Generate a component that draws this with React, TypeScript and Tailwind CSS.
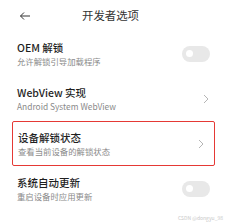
import React from 'react';

interface Item {
  title: string;
  desc: string;
  kind: 'toggle' | 'chevron';
  boxed?: boolean;
}

const items: Item[] = [
  { title: 'OEM 解锁', desc: '允许解锁引导加载程序', kind: 'toggle' },
  { title: 'WebView 实现', desc: 'Android System WebView', kind: 'chevron' },
  { title: '设备解锁状态', desc: '查看当前设备的解锁状态', kind: 'chevron', boxed: true },
  { title: '系统自动更新', desc: '重启设备时应用更新', kind: 'toggle' },
  { title: 'USB 调试', desc: '连接 USB 后启用调试模式', kind: 'toggle' },
];

function Toggle() {
  return (
    <div className="w-[28px] h-[16px] rounded-full bg-[#e8e8e8] flex items-center pl-[4px] shrink-0">
      <div className="w-[7px] h-[7px] rounded-full bg-white" />
    </div>
  );
}

function Chevron() {
  return (
    <svg width="6" height="10" viewBox="0 0 6 10" className="shrink-0 mr-[1px]">
      <path d="M1 1 L5 5 L1 9" fill="none" stroke="#b5b5b5" strokeWidth="1" />
    </svg>
  );
}

export default function App() {
  return (
    <div
      className="relative w-[227px] h-[222px] overflow-hidden bg-white"
      style={{ fontFamily: '"Noto Sans CJK SC", "Noto Sans", sans-serif' }}
    >
      {/* Header */}
      <div className="h-[31px] flex items-center pl-[19px]">
        <svg width="12" height="10" viewBox="0 0 12 10">
          <path d="M11 5 H1.5 M5 1.5 L1.5 5 L5 8.5" fill="none" stroke="#333" strokeWidth="1" />
        </svg>
        <span className="ml-[51px] text-[11.4px] text-[#333] leading-none">开发者选项</span>
      </div>

      {/* Settings list */}
      <div className="flex flex-col">
        {items.map((item) => (
          <div
            key={item.title}
            className={
              item.boxed
                ? 'h-[45px] mx-[12px] px-[5px] pr-[9px] border-[1.5px] border-[#e53935] rounded-[2px] flex items-center justify-between'
                : 'h-[45px] px-[17px] flex items-center justify-between'
            }
          >
            <div className="flex flex-col">
              <span className="text-[10.5px] font-medium text-[#1f1f1f] leading-[14px]">{item.title}</span>
              <span className="text-[8.4px] text-[#8a8a8a] leading-[11px] mt-[1px]">{item.desc}</span>
            </div>
            {item.kind === 'toggle' ? <Toggle /> : <Chevron />}
          </div>
        ))}
      </div>

      {/* Watermark */}
      <span className="absolute right-[4px] bottom-[2px] text-[5px] text-[#c8c8c8] leading-none">
        CSDN @dongyu_98
      </span>
    </div>
  );
}
